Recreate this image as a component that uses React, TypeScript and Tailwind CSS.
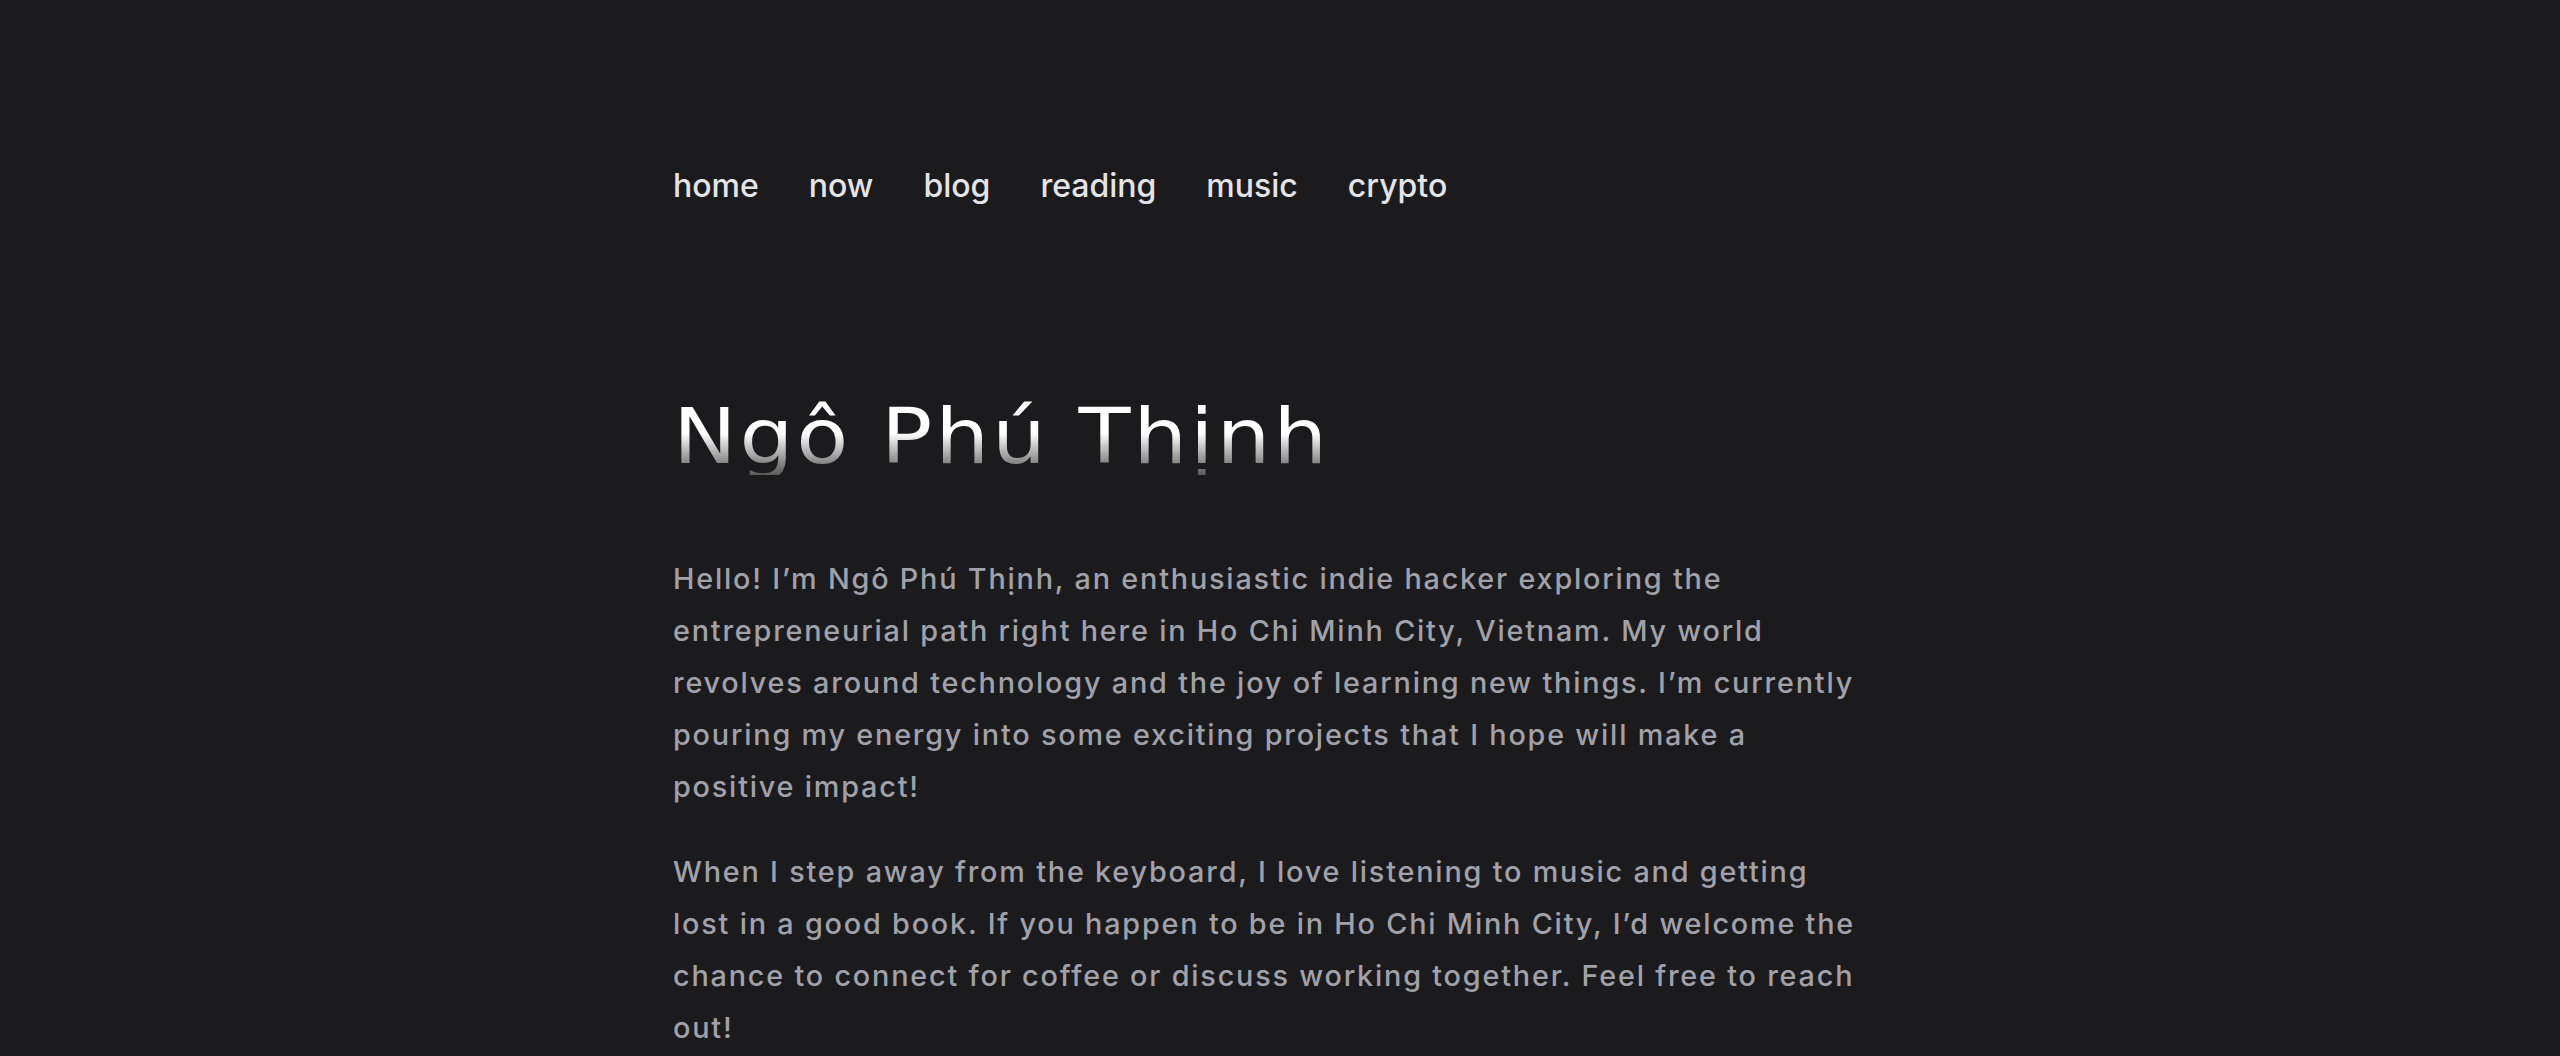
import React from "react";

const navItems = ["home", "now", "blog", "reading", "music", "crypto"];

export default function App() {
  return (
    <div className="min-h-screen w-full bg-[#1b1b1d]" style={{ fontFamily: "Inter, 'Noto Sans', sans-serif" }}>
      <div className="mx-auto w-[1214px] pt-[162px]">
        <nav className="flex gap-[50px] text-[32px] leading-[48px] font-medium text-[#e4e4e7]">
          {navItems.map((item) => (
            <a key={item} href="#" className="block">
              {item}
            </a>
          ))}
        </nav>

        <h1
          className="mt-[189px] text-[76px] leading-[76px] font-normal tracking-[2.5px] bg-gradient-to-b from-white from-45% to-[#5a5a5a] bg-clip-text text-transparent w-fit origin-left scale-x-[1.12]"
          style={{ fontFamily: "'DejaVu Sans', sans-serif" }}
        >
          Ngô Phú Thịnh
        </h1>

        <div className="mt-[78px] text-[28.8px] leading-[52px] font-medium tracking-[1.8px] text-[#a1a1aa]">
          <p>
            Hello! I’m Ngô Phú Thịnh, an enthusiastic indie hacker exploring the
            <br />
            entrepreneurial path right here in Ho Chi Minh City, Vietnam. My world
            <br />
            revolves around technology and the joy of learning new things. I’m currently
            <br />
            pouring my energy into some exciting projects that I hope will make a
            <br />
            positive impact!
          </p>
          <p className="mt-[33px]">
            When I step away from the keyboard, I love listening to music and getting
            <br />
            lost in a good book. If you happen to be in Ho Chi Minh City, I’d welcome the
            <br />
            chance to connect for coffee or discuss working together. Feel free to reach
            <br />
            out!
          </p>
        </div>
      </div>
    </div>
  );
}
